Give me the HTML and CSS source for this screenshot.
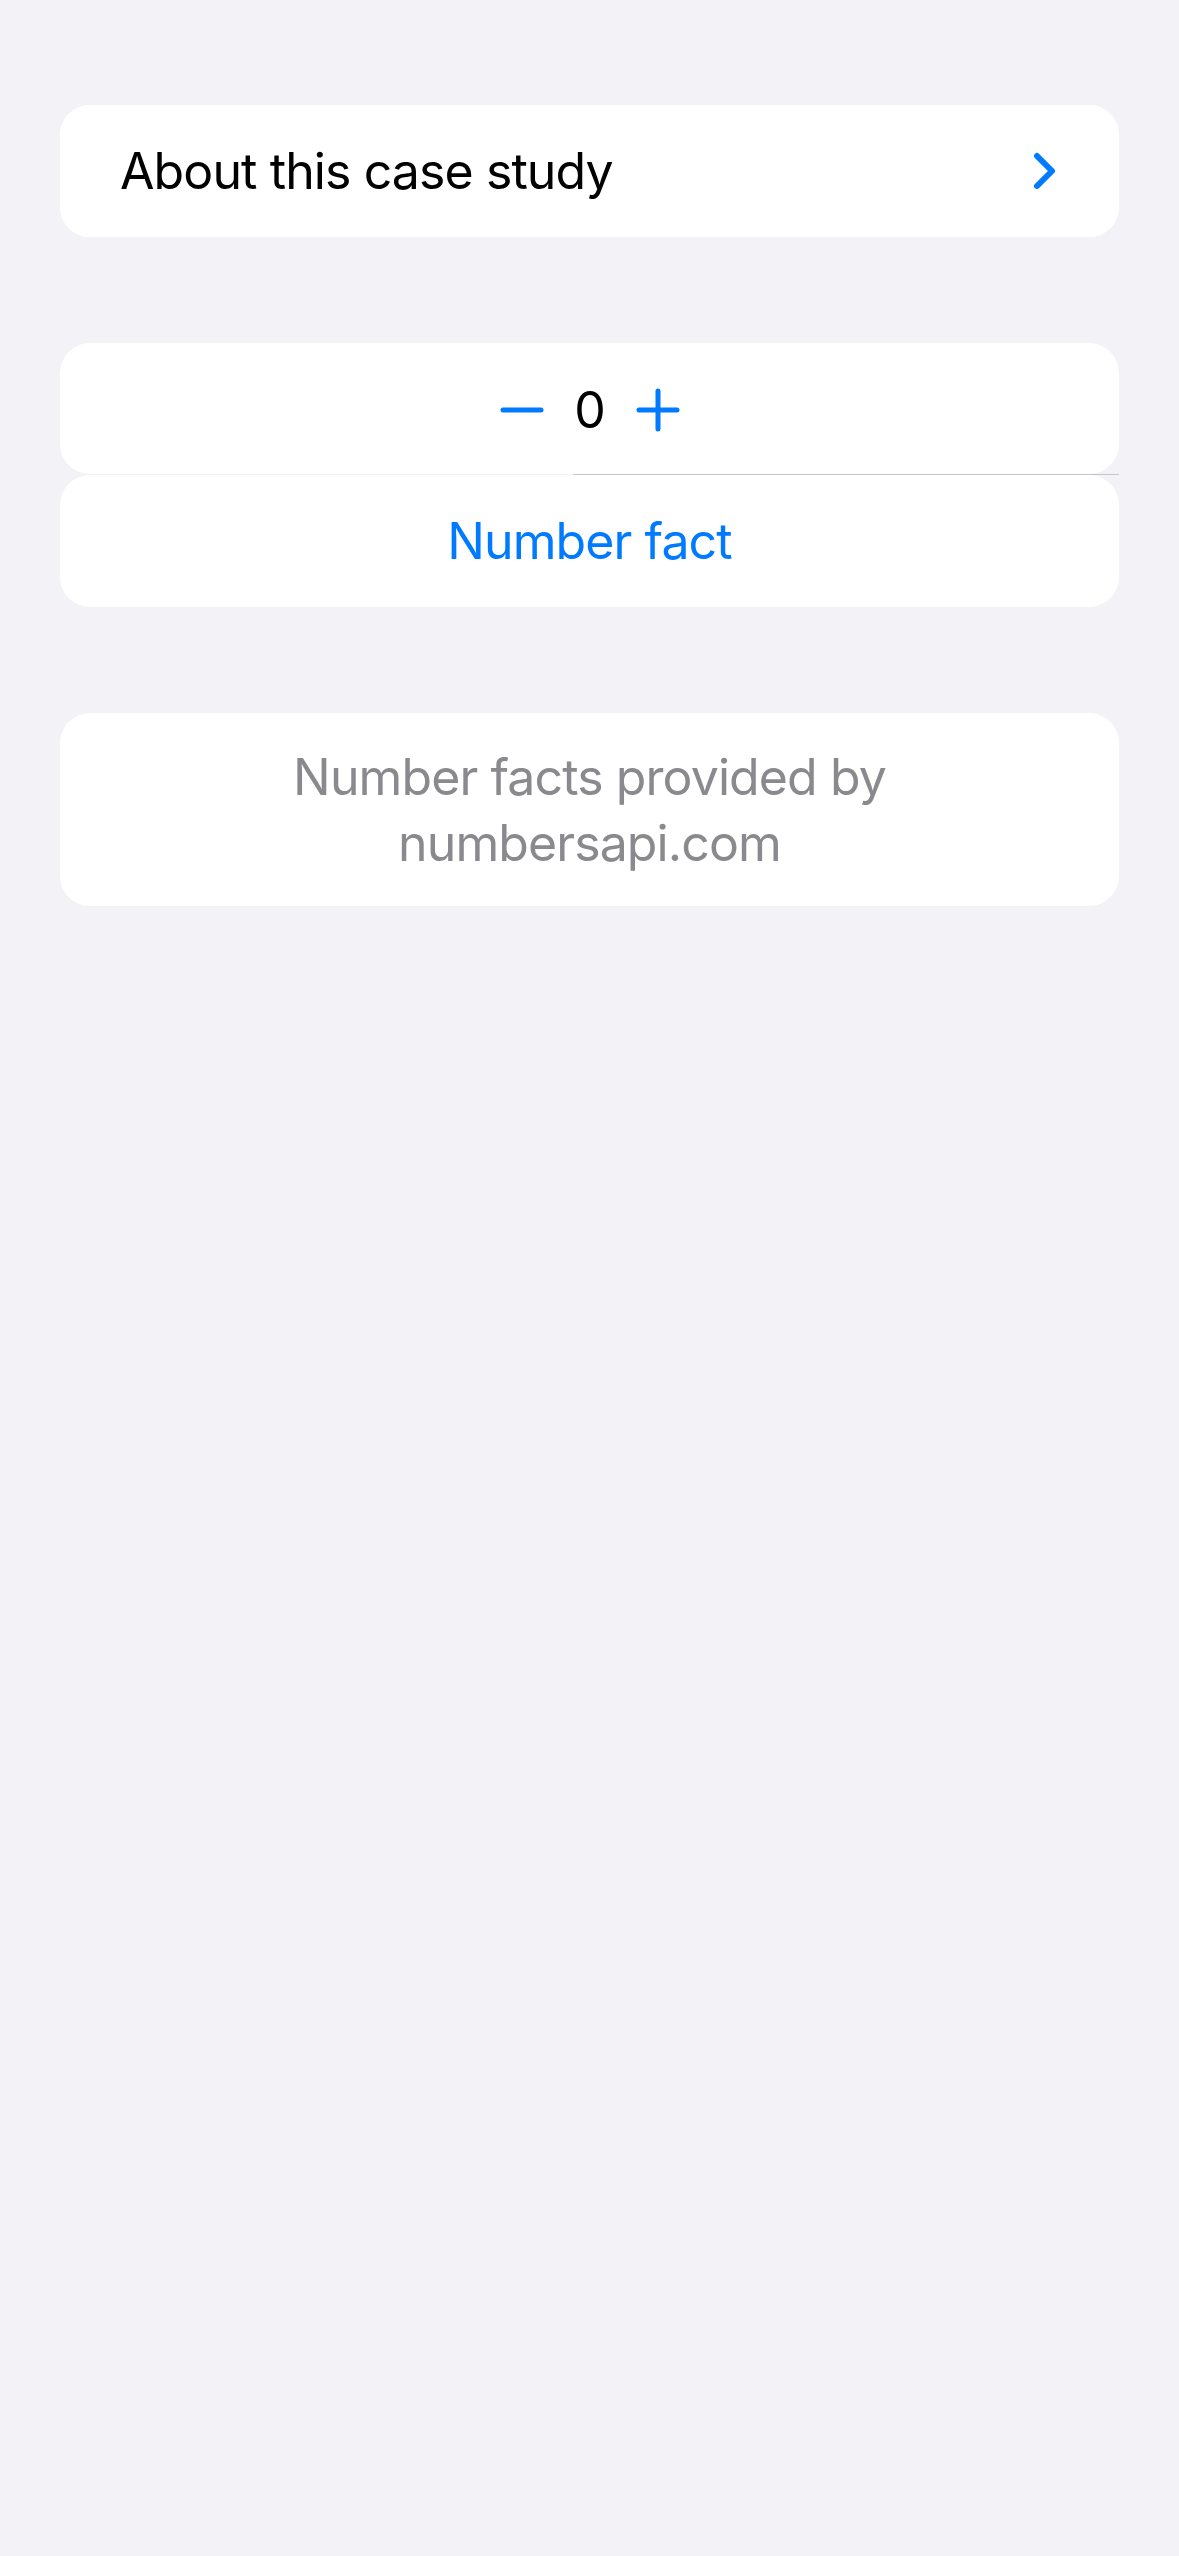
FILE: index.html
```html
<!DOCTYPE html>
<html>
<head>
<meta charset="utf-8">
<link rel="stylesheet" href="styles.css">
</head>
<body>
<main class="page">
  <section class="card">
    <div class="row nav-row">
      <span class="label">About this case study</span>
      <svg class="chevron" width="24" height="38" viewBox="0 0 24 38"><path d="M4 4 L19 19 L4 34" fill="none" stroke="#007aff" stroke-width="6" stroke-linecap="round" stroke-linejoin="round"/></svg>
    </div>
  </section>

  <section class="group">
    <div class="row stepper-row">
      <div class="stepper">
        <svg class="icon" width="44" height="44" viewBox="0 0 44 44"><path d="M3 22 H41" stroke="#007aff" stroke-width="5" stroke-linecap="round"/></svg>
        <span class="value">0</span>
        <svg class="icon" width="44" height="44" viewBox="0 0 44 44"><path d="M3 22 H41 M22 3 V41" stroke="#007aff" stroke-width="5" stroke-linecap="round"/></svg>
      </div>
    </div>
    <div class="separator"></div>
    <div class="row button-row">
      <span class="link">Number fact</span>
    </div>
  </section>

  <section class="card">
    <div class="footer-row">
      <p class="note">Number facts provided by<br>numbersapi.com</p>
    </div>
  </section>
</main>
</body>
</html>
```

FILE: styles.css
```css
html, body {
  margin: 0;
  padding: 0;
}
body {
  background: #f2f2f7;
  font-family: Inter, "Noto Sans", sans-serif;
  min-height: 2556px;
}
.page {
  display: flex;
  flex-direction: column;
  gap: 106px;
  padding: 105px 60px 0;
}
.card, .row {
  background: #fff;
  border-radius: 30px;
}
.row {
  display: flex;
  align-items: center;
}
.nav-row {
  height: 132px;
  padding: 0 62px 0 60px;
  justify-content: space-between;
}
.label {
  font-size: 50px;
  color: #000;
  letter-spacing: -0.9px;
}
.chevron {
  display: block;
}
.group {
  display: flex;
  flex-direction: column;
}
.stepper-row {
  height: 131px;
  justify-content: center;
}
.stepper {
  display: flex;
  align-items: center;
  gap: 30px;
  padding-top: 2px;
  padding-left: 1px;
}
.icon { display: block; }
.value {
  font-size: 50px;
  color: #000;
  line-height: 1;
}
.separator {
  height: 1px;
  background: #c6c6c8;
  margin-left: 513px;
}
.button-row {
  height: 132px;
  justify-content: center;
}
.link {
  font-size: 50px;
  color: #007aff;
  letter-spacing: -0.9px;
}
.footer-row {
  height: 193px;
  display: flex;
  align-items: center;
  justify-content: center;
}
.note {
  margin: 0;
  text-align: center;
  font-size: 50px;
  line-height: 66px;
  color: #8a8a8e;
  letter-spacing: -0.9px;
}
```
